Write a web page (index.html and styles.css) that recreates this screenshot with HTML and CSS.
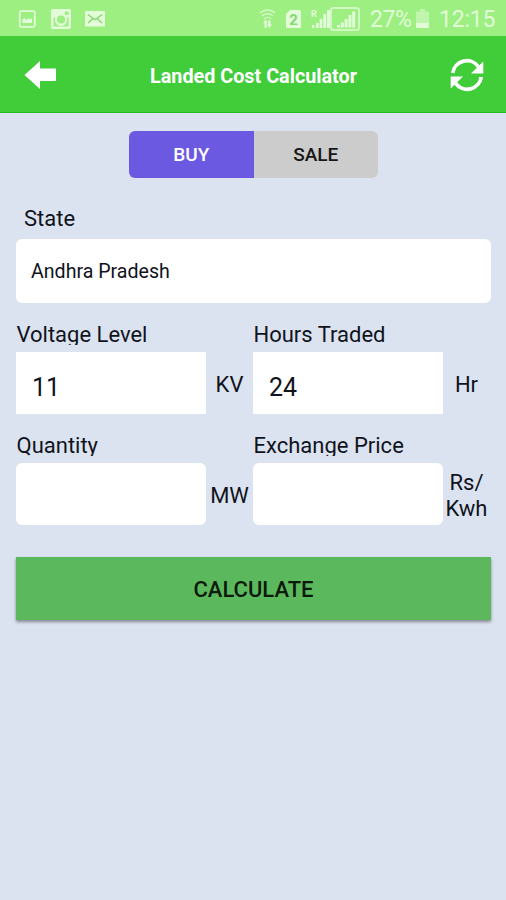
FILE: index.html
```
<!DOCTYPE html>
<html lang="en">
<head>
  <meta charset="UTF-8" />
  <meta name="viewport" content="width=device-width, initial-scale=1.0" />
  <title>Landed Cost Calculator</title>
  <link rel="stylesheet" href="styles.css">
</head>
<body>

  <!-- status bar -->
  <div class="status-bar">
    <div class="notifications">
      <svg width="18" height="18" viewBox="0 0 18 18">
        <rect x="1.8" y="1.2" width="15" height="15.6" rx="1.5" fill="none" stroke="currentColor" stroke-width="1.8" />
        <path d="M4.500 13V9.500l2-1.500 2 2 2.500-2 1 1.500 2-1.500V13z" fill="currentColor" />
      </svg>
      <svg width="20" height="20" viewBox="0 0 20 20">
        <path fill="currentColor" fill-rule="evenodd" d="M2 0h16a2 2 0 0 1 2 2v16a2 2 0 0 1-2 2H2a2 2 0 0 1-2-2V2a2 2 0 0 1 2-2zM14 2.500v3.500h3.500v-3.500zM2.500 8.500v9h15v-9h-2a6 6 0 1 1-11 0zM10 6.500a4 4 0 1 0 0 8 4 4 0 0 0 0-8z" />
      </svg>
      <svg width="20" height="16" viewBox="0 0 20 16">
        <rect width="20" height="15.500" rx="1" fill="currentColor" />
        <path d="M3 3.500l5 4L3 12M17 3.500l-5 4 5 4.500M7 6.800l3 1.500 3-1.500" fill="none" stroke="#86d870" stroke-width="1.5" />
      </svg>
    </div>
    <div class="indicators">
      <svg class="wifi" width="19" height="20" viewBox="0 0 19 20">
        <path d="M2 4a11 11 0 0 1 15 0M4 7a8 8 0 0 1 11 0M6 10a5 5 0 0 1 7 0" fill="none" stroke="currentColor" stroke-width="1.400" opacity=".75" />
        <path d="M5 14l2.500-3.500 2.200 3.500H8.800v5H6.500v-5zM10 15.500v-4h2.500v4H14L11.500 19l-2.500-3.500z" fill="currentColor" />
      </svg>
      <svg class="sim" width="15" height="18" viewBox="0 0 15 18">
        <path d="M4 0h9.500a1.500 1.500 0 0 1 1.500 1.500v15a1.500 1.500 0 0 1-1.500 1.500h-12A1.500 1.500 0 0 1 0 16.500V4z" fill="currentColor" />
        <text x="7.500" y="14.500" class="sim-number">2</text>
      </svg>
      <svg class="signal" width="19" height="20" viewBox="0 0 19 20">
        <text x="0" y="8" class="roaming">R</text>
        <path d="M1 16h2.500v3H1zM5 14h2.700v5H5zM8.600 10h2.800v9H8.600zM12.300 5h2.900v14h-2.900zM16 1h3v18H16z" fill="currentColor" />
      </svg>
      <svg class="signal-box" width="30" height="24" viewBox="0 0 30 24">
        <rect x="1" y="1" width="28" height="22" rx="2" fill="none" stroke="currentColor" stroke-width="1.500" />
        <path d="M7 18h3v2.500H7zM10.800 15.500h3v5h-3zM14.600 12h3v8.500h-3zM18.400 8h3v12.500h-3zM22.200 4.500h3v16h-3z" fill="currentColor" />
      </svg>
      <span class="percent">27%</span>
      <svg class="battery" width="13" height="20" viewBox="0 0 13 20">
        <path d="M4 0h5v2.500h3a1 1 0 0 1 1 1V14H0V3.500a1 1 0 0 1 1-1h3z" fill="currentColor" opacity=".5" />
        <path d="M0 14h13v4a1 1 0 0 1-1 1H1a1 1 0 0 1-1-1z" fill="currentColor" />
      </svg>
      <span class="clock">12:15</span>
    </div>
  </div>

  <header class="app-bar">
    <button class="icon-button">
      <svg width="33" height="30" viewBox="0 0 33 30">
        <path d="M0.500 15L16 1v7.500h16v12.500H16V29z" fill="#fff" />
      </svg>
    </button>
    <h1>Landed Cost Calculator</h1>
    <button class="icon-button">
      <svg width="34" height="34" viewBox="0 0 34 34">
        <path d="M2.800 15A14.200 14.200 0 0 1 28.500 8.800M31.200 19A14.200 14.200 0 0 1 5.500 25.200" fill="none" stroke="#fff" stroke-width="3.800" />
        <path d="M33.300 3.500v12H21zM0.700 30.500v-12H13z" fill="#fff" />
      </svg>
    </button>
  </header>

  <main>
    <div class="toggle">
      <button class="active">BUY</button>
      <button>SALE</button>
    </div>

    <label class="state-label">State</label>
    <div class="select">Andhra Pradesh</div>

    <div class="row">
      <div class="field">
        <label>Voltage Level</label>
        <div class="field-line">
          <input class="square" type="text" value="11" />
          <span class="unit">KV</span>
        </div>
      </div>
      <div class="field">
        <label>Hours Traded</label>
        <div class="field-line">
          <input class="square" type="text" value="24" />
          <span class="unit">Hr</span>
        </div>
      </div>
    </div>

    <div class="row">
      <div class="field">
        <label>Quantity</label>
        <div class="field-line">
          <input type="text" />
          <span class="unit">MW</span>
        </div>
      </div>
      <div class="field">
        <label>Exchange Price</label>
        <div class="field-line">
          <input type="text" />
          <span class="unit">Rs/<br>Kwh</span>
        </div>
      </div>
    </div>

    <button class="calculate">CALCULATE</button>
  </main>

</body>
</html>
```

FILE: styles.css
```
:root {
  --main-bg: #dce3f0;
  --text-color: #10131c;
  --bar: #41cd39;
  --status: #9def81;
  --status-icon: #e2fbd9;
}

* {
  box-sizing: border-box;
}

body {
  margin: 0;
  min-height: 100vh;
  background: var(--main-bg);
  color: var(--text-color);
  font-family: Roboto, "Liberation Sans", sans-serif;
  font-size: 22px;
}

button {
  border: none;
  padding: 0;
  font-family: inherit;
  cursor: pointer;
}

svg {
  display: block;
}

/* status bar */
.status-bar {
  display: flex;
  justify-content: space-between;
  align-items: center;
  height: 36px;
  padding: 1px 12px 0 18px;
  background: var(--status);
  color: var(--status-icon);
}

.notifications,
.indicators {
  display: flex;
  align-items: center;
}

.notifications {
  gap: 14px;
}

.notifications svg:first-child {
  margin-right: 1px;
}

.wifi {
  margin-right: 9px;
}

.sim {
  margin-right: 10px;
}

.sim-number {
  font-size: 15px;
  font-weight: 700;
  text-anchor: middle;
  fill: #86d870;
}

.roaming {
  font-size: 9px;
  font-weight: 700;
  fill: currentColor;
}

.percent,
.clock {
  font-size: 23px;
  line-height: 34px;
  padding-top: 2px;
}

.percent {
  width: 42px;
  margin-left: 10px;
  margin-right: 4px;
  letter-spacing: -0.4px;
}

.clock {
  width: 55px;
  margin-left: 10px;
  letter-spacing: -0.2px;
}

/* app bar */
.app-bar {
  display: flex;
  justify-content: space-between;
  align-items: center;
  height: 77px;
  padding: 2px 22px 0 24px;
  background: var(--bar);
  border-bottom: 1px solid #25bb27;
}

.app-bar h1 {
  margin: 0;
  padding-top: 2px;
  color: #fff;
  font-size: 19.8px;
  font-weight: 700;
}

.icon-button {
  background: none;
}

main {
  display: flex;
  flex-direction: column;
  padding: 18px 15px 0 16px;
}

.toggle {
  display: flex;
  align-self: center;
  width: 249px;
  height: 47px;
  border-radius: 6px;
  overflow: hidden;
}

.toggle button {
  flex: 1;
  background: #ccc;
  color: #161616;
  font-size: 19px;
  font-weight: 500;
}

.toggle .active {
  background: #6b59e2;
  color: #fff;
}

.state-label {
  margin: 27px 0 0 8px;
  height: 34px;
  line-height: 27px;
}

.select {
  height: 64px;
  padding-left: 15px;
  border-radius: 6px;
  background: #fff;
  font-size: 19.6px;
  line-height: 66px;
}

.row {
  display: flex;
  margin-top: 20px;
}

.field {
  width: 237px;
}

/* label box is shorter than the line, so descenders get cut */
.field label {
  display: block;
  height: 22px;
  margin-bottom: 7px;
  padding-left: 0.5px;
  line-height: 24px;
  overflow: hidden;
  white-space: nowrap;
}

.field-line {
  display: flex;
  align-items: center;
}

input {
  width: 190px;
  height: 62px;
  padding: 8px 16px 0;
  border: none;
  border-radius: 6px;
  background: #fff;
  color: var(--text-color);
  font-family: inherit;
  font-size: 25px;
}

input.square {
  border-radius: 0;
}

.unit {
  width: 47px;
  padding-top: 3px;
  text-align: center;
  line-height: 26px;
}

.calculate {
  height: 63px;
  margin-top: 32px;
  padding-top: 2px;
  background: #5cb85c;
  color: #0b1a0b;
  font-size: 22px;
  font-weight: 500;
  box-shadow: 0 2px 3px rgba(0, 0, 0, 0.4);
}
```
